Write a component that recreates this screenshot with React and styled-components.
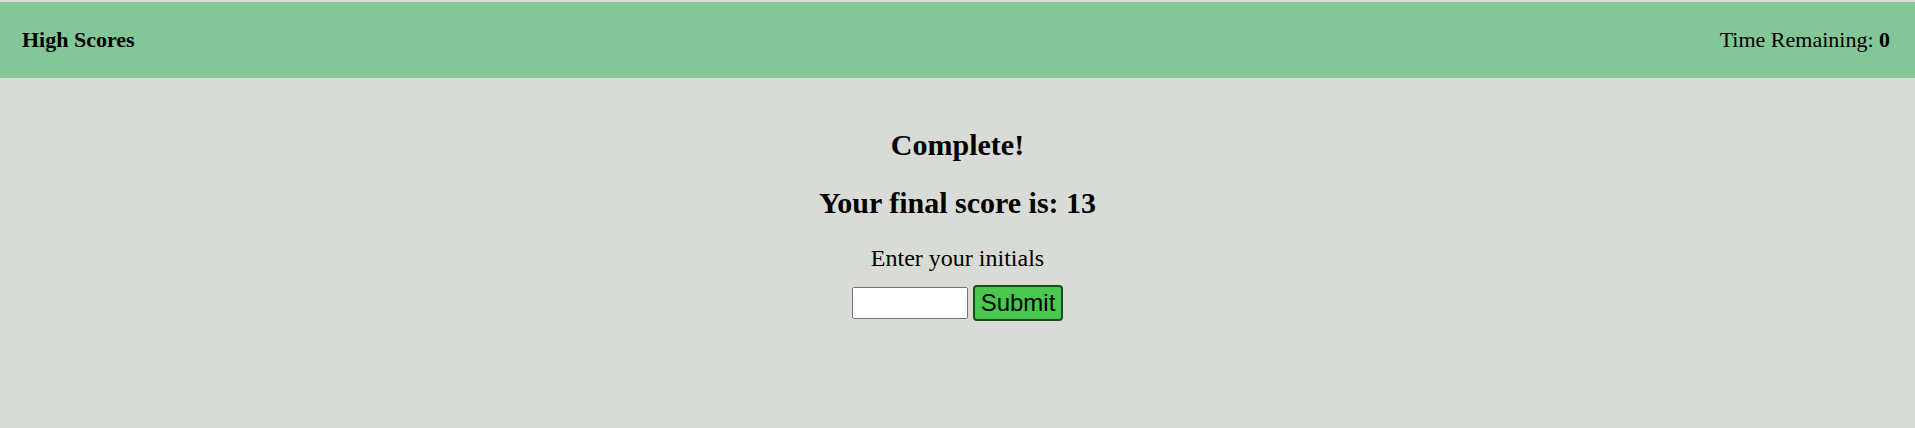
import styled, { createGlobalStyle } from 'styled-components';

const GlobalStyle = createGlobalStyle`
   html, body {
      margin: 0;
      padding: 0;
      background-color: #d9dbd6;
      font-family: "Liberation Serif", "Times New Roman", serif;
      color: #000;
   }
`;

const Header = styled.header`
   display: flex;
   justify-content: space-between;
   align-items: center;
   margin-top: 2px;
   height: 76px;
   padding: 0 25px 0 22px;
   background-color: #83c698;
   font-size: 22px;
`;

const HighScores = styled.a`
   font-weight: bold;
   color: #000;
   text-decoration: none;
`;

const Timer = styled.div`
   b {
      font-weight: bold;
   }
`;

const Main = styled.main`
   display: flex;
   flex-direction: column;
   align-items: center;
   padding-top: 48px;
`;

const Title = styled.h2`
   margin: 0;
   font-size: 30px;
   line-height: 38px;
   font-weight: bold;
`;

const Score = styled(Title)`
   margin-top: 20px;
`;

const Label = styled.p`
   margin: 22px 0 0;
   font-size: 24px;
   line-height: 28px;
`;

const Form = styled.form`
   display: flex;
   align-items: center;
   gap: 5px;
   margin-top: 13px;
`;

const Input = styled.input`
   box-sizing: border-box;
   width: 116px;
   height: 32px;
   border: 1px solid #767676;
   border-radius: 2px;
   background: #fff;
`;

const Button = styled.button`
   box-sizing: border-box;
   height: 36px;
   padding: 0 6px;
   font-family: "Liberation Sans", Arial, sans-serif;
   font-size: 24px;
   background-color: #48c84e;
   border: 2px solid #1c4a1e;
   border-radius: 4px;
   color: #000;
`;

function App() {
   return (
      <>
         <GlobalStyle />
         <Header>
            <HighScores href="#">High Scores</HighScores>
            <Timer>
               Time Remaining: <b>0</b>
            </Timer>
         </Header>
         <Main>
            <Title>Complete!</Title>
            <Score>Your final score is: 13</Score>
            <Label>Enter your initials</Label>
            <Form onSubmit={(e) => e.preventDefault()}>
               <Input type="text" />
               <Button type="submit">Submit</Button>
            </Form>
         </Main>
      </>
   );
}

export default App;
